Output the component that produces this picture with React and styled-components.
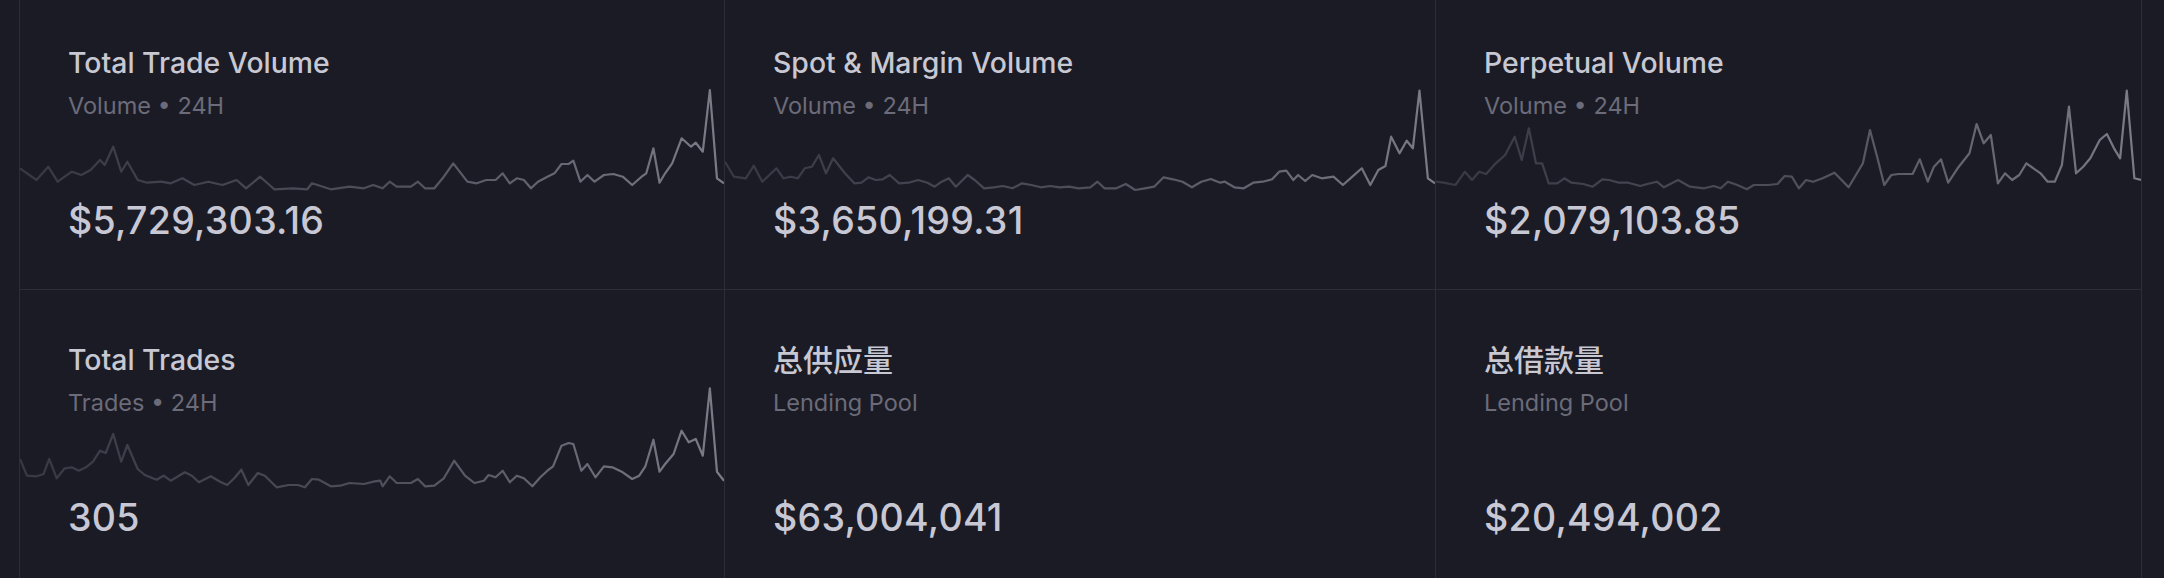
import React from "react";
import styled, { createGlobalStyle } from "styled-components";

// sampled series, read off the chart at its own pixel grid
const scale = (raw, x0, x1, shift) =>
    raw.map(([x, y]) => [((x - x0) / (x1 - x0)) * 1000, y / 3 - shift]);

const totalVolume = scale([
    [40,505],[75,540],[100,500],[120,545],[150,515],[170,525],[190,510],[210,480],[220,495],[238,440],
    [255,515],[268,485],[290,540],[310,548],[340,545],[360,550],[385,535],[410,555],[440,545],[470,555],
    [500,540],[520,565],[550,530],[580,568],[620,565],[650,568],[660,550],[700,568],[740,560],[770,565],
    [790,555],[810,565],[825,545],[840,560],[870,560],[885,545],[900,565],[920,565],[940,530],[960,490],
    [990,545],[1010,550],[1030,540],[1050,540],[1065,520],[1080,550],[1095,535],[1110,540],[1125,565],
    [1140,545],[1160,530],[1175,520],[1190,492],[1205,492],[1215,482],[1230,545],[1245,525],[1260,545],
    [1280,525],[1300,522],[1320,530],[1340,555],[1360,530],[1370,520],[1385,445],[1398,548],[1410,520],
    [1425,490],[1445,415],[1465,440],[1475,428],[1490,455],[1505,270],[1520,535],[1535,550],
], 40, 1535, 85);

const spotVolume = scale([
    [11,485],[30,530],[55,535],[72,497],[90,545],[105,525],[120,505],[135,535],[150,530],[165,535],
    [180,505],[195,500],[210,465],[225,520],[240,475],[265,520],[285,550],[300,548],[315,532],[330,540],
    [345,538],[360,525],[380,550],[400,548],[420,540],[440,548],[455,560],[470,545],[485,535],[500,560],
    [525,525],[540,540],[560,565],[580,562],[600,558],[620,565],[640,550],[660,555],[680,562],[700,558],
    [720,562],[740,560],[760,565],[785,562],[800,545],[815,565],[840,565],[860,552],[880,570],[900,565],
    [920,560],[940,532],[960,538],[980,545],[1000,562],[1020,545],[1040,537],[1060,548],[1070,545],
    [1090,562],[1110,565],[1130,548],[1150,545],[1170,538],[1185,515],[1200,512],[1215,540],[1225,525],
    [1240,543],[1255,525],[1275,535],[1300,530],[1320,555],[1340,530],[1360,505],[1378,555],[1395,510],
    [1410,498],[1422,410],[1440,460],[1455,422],[1468,445],[1482,272],[1500,535],[1515,550],
], 11, 1515, 85);

const perpVolume = scale([
    [34,545],[50,548],[75,555],[95,515],[110,540],[125,515],[140,522],[160,490],[180,465],[200,410],
    [215,480],[230,385],[245,490],[258,490],[272,550],[290,550],[305,535],[320,548],[345,552],[365,560],
    [385,538],[400,540],[420,548],[440,548],[465,558],[480,552],[500,545],[515,562],[545,540],[570,560],
    [600,565],[620,558],[635,565],[650,545],[670,555],[690,568],[705,555],[735,555],[755,552],[770,528],
    [785,530],[800,565],[815,540],[830,545],[850,535],[875,518],[890,540],[905,562],[935,490],[950,390],
    [965,470],[980,555],[995,525],[1010,522],[1040,522],[1055,478],[1072,545],[1085,500],[1100,478],
    [1115,548],[1135,505],[1160,460],[1175,372],[1190,430],[1205,405],[1220,550],[1235,520],[1250,540],
    [1265,525],[1280,490],[1295,505],[1310,520],[1325,545],[1340,545],[1355,495],[1370,320],[1385,520],
    [1400,500],[1415,475],[1435,420],[1450,402],[1465,445],[1478,475],[1492,272],[1508,535],[1522,540],
], 34, 1522, 85);

const tradeCount = scale([
    [40,540],[55,590],[75,592],[90,585],[102,540],[118,598],[135,568],[150,565],[165,575],[180,565],
    [195,548],[210,515],[222,522],[238,465],[255,548],[268,498],[290,570],[305,588],[330,602],[345,590],
    [360,605],[390,580],[405,590],[420,610],[445,592],[465,608],[480,618],[495,598],[510,572],[525,618],
    [545,582],[560,590],[585,625],[610,618],[630,618],[645,625],[660,600],[675,602],[700,622],[720,620],
    [740,612],[770,615],[790,608],[805,605],[810,622],[825,592],[840,612],[870,612],[885,600],[900,622],
    [920,620],[940,598],[962,545],[985,590],[1005,612],[1025,605],[1035,588],[1050,595],[1065,575],
    [1080,610],[1095,590],[1110,598],[1128,622],[1145,595],[1160,575],[1172,562],[1190,500],[1205,492],
    [1215,495],[1232,575],[1245,555],[1262,595],[1280,562],[1298,565],[1320,580],[1340,600],[1355,590],
    [1368,562],[1385,482],[1398,578],[1410,555],[1428,525],[1445,455],[1460,490],[1475,480],[1490,530],
    [1505,328],[1520,578],[1535,605],
], 40, 1535, 103);

const stats = [
    { id: "tv", title: "Total Trade Volume", sub: "Volume • 24H", value: "$5,729,303.16", series: totalVolume },
    { id: "sm", title: "Spot & Margin Volume", sub: "Volume • 24H", value: "$3,650,199.31", series: spotVolume },
    { id: "pv", title: "Perpetual Volume", sub: "Volume • 24H", value: "$2,079,103.85", series: perpVolume },
    { id: "tt", title: "Total Trades", sub: "Trades • 24H", value: "305", series: tradeCount },
    { id: "ts", title: "总供应量", sub: "Lending Pool", value: "$63,004,041", cjk: true },
    { id: "tb", title: "总借款量", sub: "Lending Pool", value: "$20,494,002", cjk: true },
];

function Sparkline({ id, points }) {
    return (
        <ChartSlot>
            {points && (
                <svg width="100%" height="100%" viewBox="0 0 1000 110" preserveAspectRatio="none">
                    <defs>
                        <linearGradient id={`line-${id}`} x1="0" y1="0" x2="1" y2="0">
                            <stop offset="0" stopColor="#383845" />
                            <stop offset="0.5" stopColor="#4e4e5b" />
                            <stop offset="1" stopColor="#7c7c89" />
                        </linearGradient>
                    </defs>
                    <polyline
                        points={points.map(([x, y]) => `${x.toFixed(1)},${y.toFixed(1)}`).join(" ")}
                        fill="none"
                        stroke={`url(#line-${id})`}
                        strokeWidth="2.2"
                        strokeLinejoin="round"
                        vectorEffect="non-scaling-stroke"
                    />
                </svg>
            )}
        </ChartSlot>
    );
}

function StatCard({ data }) {
    return (
        <Cell>
            <Title $cjk={data.cjk}>{data.title}</Title>
            <Subtitle>{data.sub}</Subtitle>
            <Sparkline id={data.id} points={data.series} />
            <Value>{data.value}</Value>
        </Cell>
    );
}

export default function App() {
    return (
        <>
            <GlobalStyle />
            <Grid>
                {stats.map((s) => (
                    <StatCard key={s.id} data={s} />
                ))}
            </Grid>
        </>
    );
}

const GlobalStyle = createGlobalStyle`
    html, body {
        margin: 0;
        background: #1b1b25;
        overflow: hidden;
    }
    body {
        font-family: Inter, "Noto Sans CJK SC", sans-serif;
    }
`
const Grid = styled.div`
    display: grid;
    grid-template-columns: 705px 711px 706px;
    margin: -7px 0 0 19px;
    border-left: 1px solid #2d2d39;
    width: max-content;
`
const Cell = styled.div`
    box-sizing: border-box;
    height: 297px;
    display: flex;
    flex-direction: column;
    padding: 54px 48px 0;
    border-right: 1px solid #2d2d39;
    border-bottom: 1px solid #2d2d39;
    overflow: hidden;
`
const Title = styled.div`
    font-size: ${(props) => (props.$cjk ? "30px" : "28.4px")};
    line-height: 32px;
    font-weight: 500;
    color: #c8c8d3;
`
const Subtitle = styled.div`
    margin-top: 13px;
    font-size: 23.5px;
    line-height: 28px;
    color: #6b6b79;
`
const ChartSlot = styled.div`
    height: 110px;
    margin: -35px -48px 0;
    svg {
        display: block;
    }
`
const Value = styled.div`
    margin-top: 4px;
    font-size: 37.5px;
    line-height: 44px;
    font-weight: 500;
    letter-spacing: 0.3px;
    color: #c8c8d5;
`
